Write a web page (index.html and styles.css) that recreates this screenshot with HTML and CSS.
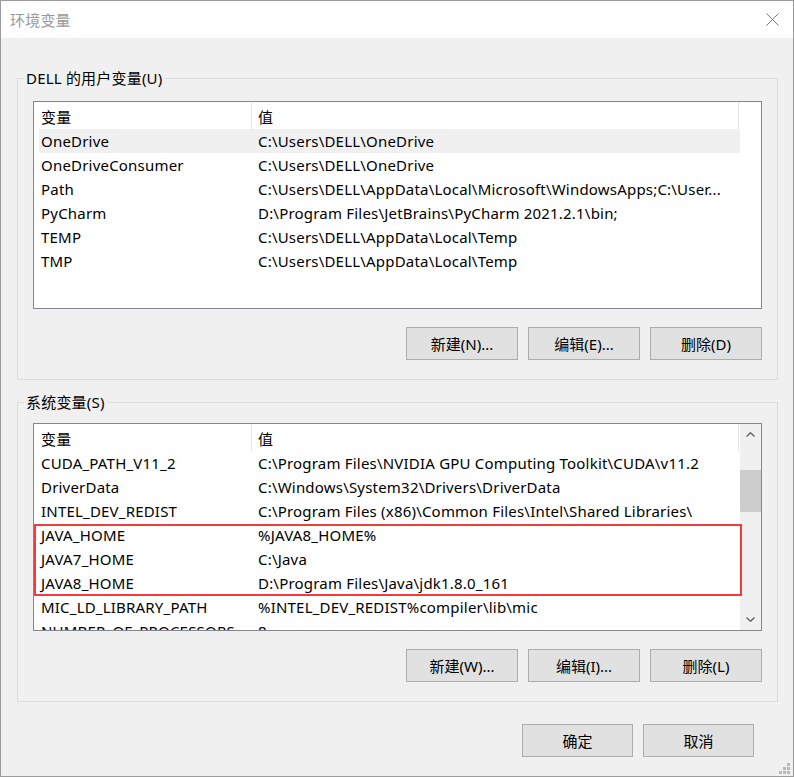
FILE: index.html
```html
<!DOCTYPE html>
<html lang="zh-CN">
<head>
  <meta charset="UTF-8" />
  <title>环境变量</title>
  <link rel="stylesheet" href="styles.css">
</head>
<body>
  <div class="window">
    <div class="titlebar">
      <span class="title">环境变量</span>
      <svg class="close" width="13" height="13" viewBox="0 0 13 13">
        <path d="M0.5 0.5 L12.5 12.5 M12.5 0.5 L0.5 12.5" stroke="#7a7a7a" stroke-width="1" fill="none"/>
      </svg>
    </div>
    <div class="content">
      <fieldset class="group">
        <legend>DELL 的用户变量(U)</legend>
        <div class="group-body">
          <div class="list">
            <div class="list-view">
              <div class="list-head"><span>变量</span><span>值</span></div>
              <div class="list-row selected"><span>OneDrive</span><span>C:\Users\DELL\OneDrive</span></div>
              <div class="list-row"><span>OneDriveConsumer</span><span>C:\Users\DELL\OneDrive</span></div>
              <div class="list-row"><span>Path</span><span>C:\Users\DELL\AppData\Local\Microsoft\WindowsApps;C:\User...</span></div>
              <div class="list-row"><span>PyCharm</span><span>D:\Program Files\JetBrains\PyCharm 2021.2.1\bin;</span></div>
              <div class="list-row"><span>TEMP</span><span>C:\Users\DELL\AppData\Local\Temp</span></div>
              <div class="list-row"><span>TMP</span><span>C:\Users\DELL\AppData\Local\Temp</span></div>
            </div>
          </div>
          <div class="buttons">
            <button class="btn">新建(N)...</button>
            <button class="btn">编辑(E)...</button>
            <button class="btn">删除(D)</button>
          </div>
        </div>
      </fieldset>

      <fieldset class="group">
        <legend>系统变量(S)</legend>
        <div class="group-body tight">
          <div class="list">
            <div class="list-view">
              <div class="list-head"><span>变量</span><span>值</span></div>
              <div class="list-row"><span>CUDA_PATH_V11_2</span><span>C:\Program Files\NVIDIA GPU Computing Toolkit\CUDA\v11.2</span></div>
              <div class="list-row"><span>DriverData</span><span>C:\Windows\System32\Drivers\DriverData</span></div>
              <div class="list-row"><span>INTEL_DEV_REDIST</span><span>C:\Program Files (x86)\Common Files\Intel\Shared Libraries\</span></div>
              <div class="list-row"><span>JAVA_HOME</span><span>%JAVA8_HOME%</span></div>
              <div class="list-row"><span>JAVA7_HOME</span><span>C:\Java</span></div>
              <div class="list-row"><span>JAVA8_HOME</span><span>D:\Program Files\Java\jdk1.8.0_161</span></div>
              <div class="list-row"><span>MIC_LD_LIBRARY_PATH</span><span>%INTEL_DEV_REDIST%compiler\lib\mic</span></div>
              <div class="list-row"><span>NUMBER_OF_PROCESSORS</span><span>8</span></div>
            </div>
            <div class="scrollbar">
              <span class="arrow">
                <svg width="9" height="5" viewBox="0 0 9 5"><polyline points="0.5,4.5 4.5,0.7 8.5,4.5" fill="none" stroke="#606060" stroke-width="1.3"/></svg>
              </span>
              <span class="track"><span class="thumb"></span></span>
              <span class="arrow">
                <svg width="9" height="5" viewBox="0 0 9 5"><polyline points="0.5,0.5 4.5,4.3 8.5,0.5" fill="none" stroke="#606060" stroke-width="1.3"/></svg>
              </span>
            </div>
            <div class="mark"></div>
          </div>
          <div class="buttons">
            <button class="btn">新建(W)...</button>
            <button class="btn">编辑(I)...</button>
            <button class="btn">删除(L)</button>
          </div>
        </div>
      </fieldset>

      <div class="footer">
        <button class="btn">确定</button>
        <button class="btn">取消</button>
      </div>
    </div>
    <svg class="grip" width="11" height="11" viewBox="0 0 11 11">
      <rect x="8" y="0" width="3" height="3" fill="#b8b8b8"/>
      <rect x="4" y="4" width="3" height="3" fill="#b8b8b8"/>
      <rect x="8" y="4" width="3" height="3" fill="#b8b8b8"/>
      <rect x="0" y="8" width="3" height="3" fill="#b8b8b8"/>
      <rect x="4" y="8" width="3" height="3" fill="#b8b8b8"/>
      <rect x="8" y="8" width="3" height="3" fill="#b8b8b8"/>
    </svg>
  </div>
</body>
</html>
```

FILE: styles.css
```css
body {
  margin: 0;
  font-family: "Noto Sans", "Noto Sans CJK SC", sans-serif;
  font-size: 15px;
  letter-spacing: 0.2px;
  color: #000;
}
.window {
  position: relative;
  width: 794px;
  height: 777px;
  box-sizing: border-box;
  border: 1px solid #9b9b9b;
  background-color: #f0f0f0;
}
.titlebar {
  height: 37px;
  background-color: #fff;
  display: flex;
  align-items: center;
  justify-content: space-between;
  padding: 0 14px 0 9px;
}
.title {
  color: #999;
}
.content {
  padding: 30px 15px 0 16px;
}
.group {
  margin: 0;
  padding: 0 6px;
  border: 1px solid #dcdcdc;
  min-width: 0;
}
.group + .group {
  margin-top: 12px;
}
.group legend {
  padding: 0 2px;
  line-height: 20px;
}
.group-body {
  padding: 13px 9px 19px;
}
.group-body.tight {
  padding-top: 11px;
}
.list {
  position: relative;
  display: flex;
  height: 208px;
  box-sizing: border-box;
  border: 1px solid #828790;
  background-color: #fff;
  overflow: hidden;
}
.list-view {
  width: 706px;
  flex: none;
  padding-left: 5px;
  box-sizing: border-box;
}
.list-head,
.list-row {
  display: grid;
  grid-template-columns: 213px 487px;
}
.list-head span,
.list-row span {
  box-sizing: border-box;
  white-space: nowrap;
  overflow: hidden;
}
.list-head span {
  height: 27px;
  padding-top: 3px;
  line-height: 24px;
  border-right: 1px solid #e5e5e5;
}
.list-row span {
  height: 24px;
  line-height: 24px;
}
.list-head span:first-child,
.list-row span:first-child {
  padding-left: 2px;
}
.list-head span:last-child,
.list-row span:last-child {
  padding-left: 6px;
}
.list-row.selected {
  background-color: #f0f0f0;
}
.scrollbar {
  width: 21px;
  flex: none;
  display: flex;
  flex-direction: column;
  background-color: #f0f0f0;
}
.arrow {
  height: 21px;
  display: flex;
  align-items: center;
  justify-content: center;
}
.track {
  flex: 1;
  padding-top: 25px;
}
.thumb {
  display: block;
  height: 42px;
  background-color: #cdcdcd;
}
.mark {
  position: absolute;
  left: 0;
  top: 100px;
  width: 708px;
  height: 72px;
  box-sizing: border-box;
  border: 2px solid #f33b3b;
}
.buttons {
  display: flex;
  justify-content: flex-end;
  gap: 10px;
  margin-top: 18px;
}
.btn {
  width: 112px;
  height: 33px;
  box-sizing: border-box;
  padding: 0;
  border: 1px solid #adadad;
  background-color: #e1e1e1;
  font: inherit;
  color: #000;
}
.footer {
  display: flex;
  justify-content: flex-end;
  gap: 10px;
  padding: 22px 24px 0 0;
}
.footer .btn {
  width: 111px;
}
.grip {
  position: absolute;
  right: 3px;
  bottom: 2px;
}
```
